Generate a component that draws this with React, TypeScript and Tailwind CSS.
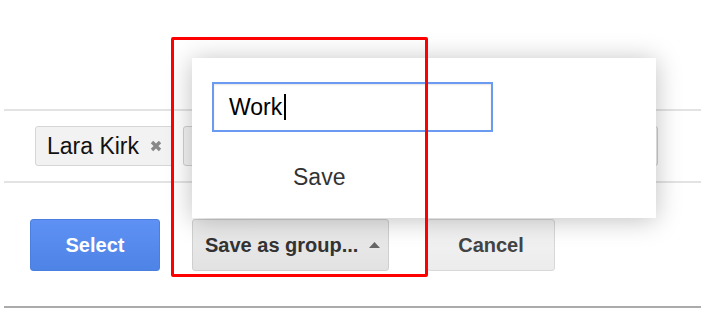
import React from "react";

export default function App() {
  return (
    <div className="relative w-[701px] h-[309px] bg-white overflow-hidden font-['Liberation_Sans',Arial,sans-serif]">
      <div className="pt-[109px] pl-[4px]">
        <div className="h-[2px] bg-[#e3e3e3]" />
        <div className="flex items-center gap-[9px] pl-[31px] h-[70px]">
          <div className="flex items-center h-[40px] w-[139px] pl-[11px] rounded-[3px] border border-[#d6d6d6] bg-[#f2f2f2]">
            <span className="text-[23px] leading-[26px] text-[#111]">Lara Kirk</span>
            <svg className="ml-[11px]" width="12" height="12" viewBox="0 0 12 12">
              <path d="M2 2 L10 10 M10 2 L2 10" stroke="#888" strokeWidth="3.4" strokeLinecap="butt" />
            </svg>
          </div>
          <div className="h-[40px] w-[475px] rounded-[3px] border border-[#d0d0d0] bg-[#f4f4f4]" />
        </div>
        <div className="h-[2px] bg-[#e3e3e3]" />
        <div className="flex items-center mt-[36px] pl-[26px] h-[52px]">
          <button className="w-[130px] h-[52px] rounded-[3px] border border-[#4a7fe0] bg-gradient-to-b from-[#5e91f3] to-[#4e84e6] text-white font-bold text-[20px]">
            Select
          </button>
          <button className="ml-[32px] w-[197px] h-[52px] flex items-center pl-[12px] rounded-[3px] border border-[#cfcfcf] bg-gradient-to-b from-[#ececec] to-[#e2e2e2] text-[#333] font-bold text-[20px]">
            <span>Save as group...</span>
            <svg className="ml-[11px]" width="11" height="7" viewBox="0 0 11 7">
              <polygon points="5.5,0 11,6 0,6" fill="#666" />
            </svg>
          </button>
          <button className="ml-[38px] w-[128px] h-[52px] rounded-[3px] border border-[#d8d8d8] bg-gradient-to-b from-[#f4f4f4] to-[#ececec] text-[#444] font-bold text-[20px]">
            Cancel
          </button>
        </div>
        <div className="mt-[35px] h-[2px] bg-[#ababab]" />
      </div>

      <div className="absolute left-[192px] top-[58px] w-[464px] h-[160px] bg-white shadow-[0_2px_24px_rgba(0,0,0,0.25)] pt-[24px] pl-[20px]">
        <div className="flex items-center w-[281px] h-[50px] border-2 border-[#6a9bf0] pl-[15px] shadow-[inset_0_1px_2px_rgba(0,0,0,0.1)]">
          <span className="text-[23px] leading-[26px] text-black">Work</span>
          <span className="ml-[2px] w-[1.5px] h-[26px] bg-black" />
        </div>
        <div className="mt-[32px] pl-[81px] text-[23px] leading-[26px] text-[#333]">Save</div>
      </div>

      <div className="absolute left-[171px] top-[37px] w-[257px] h-[240px] border-[3px] border-[#ff0000] rounded-[2px]" />
    </div>
  );
}
